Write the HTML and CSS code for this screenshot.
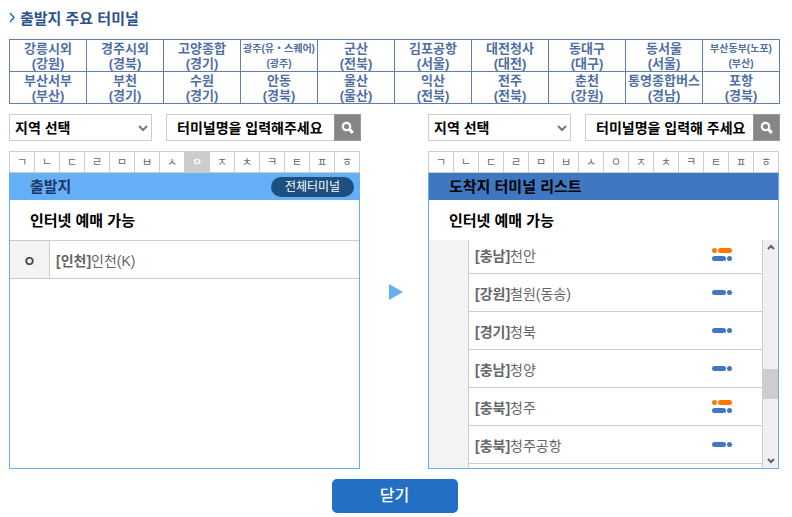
FILE: index.html
```html
<!DOCTYPE html>
<html lang="ko">
<head>
    <meta charset="UTF-8">
    <meta name="viewport" content="width=device-width, initial-scale=1.0">
    <title>터미널 선택</title>
    <link rel="stylesheet" href="styles.css">
</head>
<body>
    <h1 class="title">
        <svg class="title-arrow" width="7" height="12" viewBox="0 0 7 12"><path d="M1 1l4 4.5L1 10" fill="none" stroke="#2f6cba" stroke-width="1.5"/></svg>
        출발지 주요 터미널
    </h1>
    <table class="main-terminals">
        <tr>
            <td>강릉시외<br>(강원)</td>
            <td>경주시외<br>(경북)</td>
            <td>고양종합<br>(경기)</td>
            <td class="small">광주(유・스퀘어)<br>(광주)</td>
            <td>군산<br>(전북)</td>
            <td>김포공항<br>(서울)</td>
            <td>대전청사<br>(대전)</td>
            <td>동대구<br>(대구)</td>
            <td>동서울<br>(서울)</td>
            <td class="small">부산동부(노포)<br>(부산)</td>
        </tr>
        <tr>
            <td>부산서부<br>(부산)</td>
            <td>부천<br>(경기)</td>
            <td>수원<br>(경기)</td>
            <td>안동<br>(경북)</td>
            <td>울산<br>(울산)</td>
            <td>익산<br>(전북)</td>
            <td>전주<br>(전북)</td>
            <td>춘천<br>(강원)</td>
            <td>통영종합버스<br>(경남)</td>
            <td>포항<br>(경북)</td>
        </tr>
    </table>

    <div class="columns">
        <!-- 출발지 -->
        <section class="column">
            <form class="filter" onsubmit="return false;">
                <div class="region">
                    <select aria-label="출발 지역"><option>지역 선택</option></select>
                    <svg class="caret" width="10" height="7" viewBox="0 0 10 7"><path d="M1 1l4 4 4-4" fill="none" stroke="#777" stroke-width="2"/></svg>
                </div>
                <div class="search">
                    <input type="text" aria-label="출발 터미널명" placeholder="터미널명을 입력해주세요">
                    <button type="submit" aria-label="검색">
                        <svg width="14" height="14" viewBox="0 0 14 14"><circle cx="5.5" cy="5.5" r="3.7" fill="none" stroke="#fff" stroke-width="2.2"/><path d="M8.4 8.4l3.4 3.4" stroke="#fff" stroke-width="3.2"/></svg>
                    </button>
                </div>
            </form>
            <nav class="letters">
                <a href="#">ㄱ</a><a href="#">ㄴ</a><a href="#">ㄷ</a><a href="#">ㄹ</a><a href="#">ㅁ</a><a href="#">ㅂ</a><a href="#">ㅅ</a><a href="#" class="on">ㅇ</a><a href="#">ㅈ</a><a href="#">ㅊ</a><a href="#">ㅋ</a><a href="#">ㅌ</a><a href="#">ㅍ</a><a href="#">ㅎ</a>
            </nav>
            <div class="panel">
                <div class="panel-head">
                    <h2>출발지</h2>
                    <button type="button" class="all-btn">전체터미널</button>
                </div>
                <h3>인터넷 예매 가능</h3>
                <div class="list">
                    <div class="group">
                        <div class="group-letter">ㅇ</div>
                        <ul>
                            <li><a href="#"><b>[인천]</b>인천(K)</a></li>
                        </ul>
                    </div>
                </div>
            </div>
        </section>

        <svg class="next" width="14" height="16" viewBox="0 0 14 16"><path d="M0 0l14 8-14 8z" fill="#65aff6"/></svg>

        <!-- 도착지 -->
        <section class="column">
            <form class="filter" onsubmit="return false;">
                <div class="region">
                    <select aria-label="도착 지역"><option>지역 선택</option></select>
                    <svg class="caret" width="10" height="7" viewBox="0 0 10 7"><path d="M1 1l4 4 4-4" fill="none" stroke="#777" stroke-width="2"/></svg>
                </div>
                <div class="search">
                    <input type="text" aria-label="도착 터미널명" placeholder="터미널명을 입력해 주세요">
                    <button type="submit" aria-label="검색">
                        <svg width="14" height="14" viewBox="0 0 14 14"><circle cx="5.5" cy="5.5" r="3.7" fill="none" stroke="#fff" stroke-width="2.2"/><path d="M8.4 8.4l3.4 3.4" stroke="#fff" stroke-width="3.2"/></svg>
                    </button>
                </div>
            </form>
            <nav class="letters">
                <a href="#">ㄱ</a><a href="#">ㄴ</a><a href="#">ㄷ</a><a href="#">ㄹ</a><a href="#">ㅁ</a><a href="#">ㅂ</a><a href="#">ㅅ</a><a href="#">ㅇ</a><a href="#">ㅈ</a><a href="#">ㅊ</a><a href="#">ㅋ</a><a href="#">ㅌ</a><a href="#">ㅍ</a><a href="#">ㅎ</a>
            </nav>
            <div class="panel">
                <div class="panel-head arrive">
                    <h2>도착지 터미널 리스트</h2>
                </div>
                <h3>인터넷 예매 가능</h3>
                <div class="list scroll">
                    <div class="group">
                        <div class="group-letter"></div>
                        <ul>
                            <li><a href="#"><b>[충남]</b>천안</a><span class="marks"><i class="round"></i><i></i></span></li>
                            <li><a href="#"><b>[강원]</b>철원(동송)</a><span class="marks"><i></i></span></li>
                            <li><a href="#"><b>[경기]</b>청북</a><span class="marks"><i></i></span></li>
                            <li><a href="#"><b>[충남]</b>청양</a><span class="marks"><i></i></span></li>
                            <li><a href="#"><b>[충북]</b>청주</a><span class="marks"><i class="round"></i><i></i></span></li>
                            <li><a href="#"><b>[충북]</b>청주공항</a><span class="marks"><i></i></span></li>
                            <li></li>
                        </ul>
                    </div>
                    <div class="scrollbar">
                        <svg width="8" height="6" viewBox="0 0 8 6"><path d="M1 5l3-3 3 3" fill="none" stroke="#606060" stroke-width="2"/></svg>
                        <div class="track"><div class="thumb"></div></div>
                        <svg width="8" height="6" viewBox="0 0 8 6"><path d="M1 1l3 3 3-3" fill="none" stroke="#606060" stroke-width="2"/></svg>
                    </div>
                </div>
            </div>
        </section>
    </div>

    <button type="button" class="close-btn">닫기</button>
</body>
</html>
```
FILE: styles.css
```css
* {
    box-sizing: border-box;
}
body {
    margin: 0;
    padding: 10px 12px 4px 9px;
    background: #fff;
    color: #000;
    font-family: "Liberation Sans", "Noto Sans CJK KR", sans-serif;
    font-size: 14px;
}
h1, h2, h3, ul {
    margin: 0;
    padding: 0;
}
a {
    color: inherit;
    text-decoration: none;
}
button, input, select {
    font-family: inherit;
    margin: 0;
    border: 0;
    border-radius: 0;
}
button {
    padding: 0;
    cursor: pointer;
}
.title {
    display: flex;
    gap: 4px;
    height: 18px;
    margin-bottom: 11px;
    color: #2c528c;
    font-size: 15px;
    line-height: 18px;
}
.title-arrow {
    margin-top: 2px;
}

/* 주요 터미널 표 */
.main-terminals {
    width: 100%;
    table-layout: fixed;
    border-collapse: collapse;
    color: #506fa3;
    font-size: 13px;
    font-weight: bold;
    line-height: 15px;
    text-align: center;
}
.main-terminals td {
    height: 32px;
    padding: 0;
    border: 1px solid #5f7fab;
    white-space: nowrap;
}
.main-terminals .small {
    font-size: 10px;
}

.columns {
    display: flex;
    align-items: center;
    justify-content: space-between;
    margin-top: 10px;
}
.column {
    flex: 1;
    min-width: 0;
}
.next {
    flex: none;
    margin: 0 25px 0 28px;
}

/* 지역 선택, 검색 */
.filter {
    display: flex;
    gap: 14px;
    height: 27px;
}
.region {
    position: relative;
    flex: 143;
    min-width: 0;
}
.region select {
    width: 100%;
    height: 27px;
    padding: 0 20px 0 5px;
    border: 1px solid #ccc;
    background: #fff;
    color: #000;
    font-size: 14px;
    font-weight: bold;
    appearance: none;
}
.caret {
    position: absolute;
    top: 11px;
    right: 4px;
    pointer-events: none;
}
.search {
    flex: 195;
    min-width: 0;
    display: flex;
}
.search input {
    flex: 1;
    min-width: 0;
    padding: 0 0 0 10px;
    border: 1px solid #ccc;
    border-right: 0;
    font-size: 14px;
    font-weight: bold;
}
.search input::placeholder {
    color: #000;
}
.search button {
    flex: none;
    display: flex;
    align-items: center;
    justify-content: center;
    width: 27px;
    border: 1px solid #999;
    background: #868686;
}

/* 초성 탭 */
.letters {
    display: flex;
    height: 22px;
    margin: 10px 1px 0 0;
    border: 1px solid #ccc;
    border-width: 1px 0 0 1px;
}
.letters a {
    flex: 1;
    border-right: 1px solid #ccc;
    border-bottom: 1px solid #ccc;
    color: #666;
    font-size: 11px;
    line-height: 20px;
    text-align: center;
}
.letters .on {
    background: #ccc;
    color: #fff;
    font-weight: bold;
}

.panel {
    margin-right: 1px;
    border: 1px solid #65aff6;
    border-top: 0;
}
.panel-head {
    display: flex;
    align-items: center;
    justify-content: space-between;
    height: 27px;
    padding: 0 5px 0 20px;
    background: #65aff6;
    color: #1c3766;
}
.panel-head.arrive {
    background: #3f77c3;
    color: #000;
}
.panel-head h2 {
    font-size: 15px;
    line-height: 27px;
}
.all-btn {
    width: 83px;
    height: 20px;
    border-radius: 10px;
    background: #1d5080;
    color: #fff;
    font-size: 12px;
    line-height: 20px;
}
.panel h3 {
    height: 40px;
    padding: 2px 0 0 20px;
    font-size: 15px;
    line-height: 38px;
}

/* 터미널 목록 */
.list {
    display: flex;
    height: 228px;
    align-items: flex-start;
    overflow: hidden;
    color: #666;
}
.group {
    flex: 1;
    display: flex;
    border: 1px solid #ccc;
    border-width: 1px 0;
}
.group-letter {
    width: 40px;
    padding-top: 4px;
    border-right: 1px solid #ccc;
    background: #f3f3f3;
    color: #444;
    font-weight: bold;
    line-height: 32px;
    text-align: center;
}
.group ul {
    flex: 1;
    list-style: none;
}
.group li {
    display: flex;
    align-items: center;
    justify-content: space-between;
    height: 38px;
    padding: 0 30px 0 6px;
    border-bottom: 1px solid #ccc;
}
.group li:last-child {
    height: 37px;
    border-bottom: 0;
}
.scroll .group {
    margin-top: -5px;
}

/* 편도 / 왕복 표시 */
.marks {
    display: flex;
    flex-direction: column;
    gap: 3px;
    width: 20px;
}
.marks i {
    display: flex;
    justify-content: space-between;
    height: 5px;
}
.marks i::before, .marks i::after {
    content: "";
    width: 14px;
    border-radius: 3px;
    background: #3f77c3;
}
.marks i::after {
    width: 5px;
}
.marks .round {
    flex-direction: row-reverse;
}
.marks .round::before, .marks .round::after {
    background: #ff7800;
}

.scrollbar {
    display: flex;
    flex-direction: column;
    align-items: center;
    align-self: stretch;
    width: 16px;
    padding: 4px 0;
    border-left: 1px solid #ccc;
    background: #f0f0f0;
}
.track {
    flex: 1;
    width: 100%;
    padding-top: 119px;
}
.thumb {
    height: 30px;
    background: #cdcdcd;
}

.close-btn {
    display: block;
    width: 126px;
    height: 34px;
    margin: 10px auto 0;
    border-radius: 5px;
    background: #226fc5;
    color: #fff;
    font-size: 16px;
    font-weight: 500;
    line-height: 32px;
}
```
